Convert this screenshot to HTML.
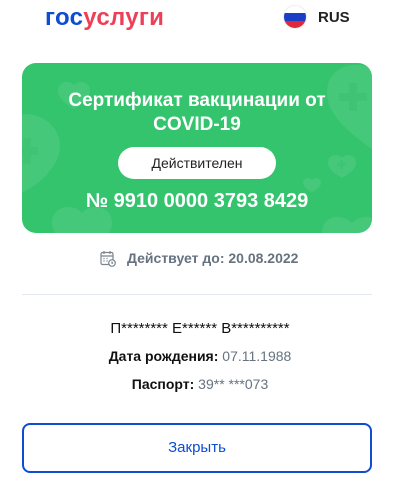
<!DOCTYPE html>
<html><head><meta charset="utf-8"><style>
body{margin:0;width:400px;height:487px;background:#fff;font-family:"Liberation Sans","DejaVu Sans",sans-serif;position:relative;overflow:hidden}
.a{position:absolute}
.c{left:0;width:400px;text-align:center}
</style></head><body>
<div class="a" style="left:45px;top:4px;font-size:24px;font-weight:bold;letter-spacing:0.3px"><span style="color:#0d4cd3">гос</span><span style="color:#ee3f58">услуги</span></div>
<div class="a" style="left:284px;top:6px;width:22px;height:22px;border-radius:50%;overflow:hidden;box-shadow:0 0 2px #ccc">
<div style="height:7.3px;background:#fff"></div><div style="height:7.4px;background:#1a3fc4"></div><div style="height:7.3px;background:#e0283a"></div></div>
<div class="a" style="left:318px;top:9px;font-size:15px;font-weight:bold;color:#222">RUS</div>

<div class="a" style="left:22px;top:63px;width:350px;height:170px;border-radius:14px;background:#33c46d;overflow:hidden">
<svg width="350" height="170" style="position:absolute;left:0;top:0">
<g fill="#52cc83" opacity="0.6">
<path d="M355 10 C340 -5 305 0 305 30 C305 55 335 75 355 90 C375 75 405 55 405 30 C405 0 370 -5 355 10Z"/>
<path d="M-10 55 C-25 45 -50 55 -45 80 C-40 105 -10 120 0 130 C20 120 40 100 38 80 C35 55 5 45 -10 55Z"/>
<path d="M52 22 C46 16 36 19 36 28 C36 36 46 42 52 46 C58 42 68 36 68 28 C68 19 58 16 52 22Z"/>
<path d="M320 95 C316 90 306 91 306 100 C306 107 315 112 320 115 C325 112 334 107 334 100 C334 91 324 90 320 95Z"/>
<path d="M290 117 C287 114 281 114 281 120 C281 124 286 127 290 129 C294 127 299 124 299 120 C299 114 293 114 290 117Z"/>
<path d="M60 150 C52 140 30 142 30 160 C30 175 50 185 60 190 C70 185 90 175 90 160 C90 142 68 140 60 150Z"/>
<path d="M330 160 C320 150 300 152 300 170 C300 180 320 190 330 195 C340 190 360 180 360 170 C360 152 340 150 330 160Z"/>
</g>
<g fill="#3ec474">
<rect x="327" y="20" width="8" height="28"/><rect x="317" y="30" width="28" height="8"/>
<rect x="1" y="75" width="8" height="26"/><rect x="-8" y="84" width="24" height="8"/>
<rect x="318" y="97" width="3" height="9"/><rect x="315" y="100" width="9" height="3"/>
</g>
</svg>
<div class="a" style="left:0;width:350px;top:26px;text-align:center;color:#fff;font-size:19px;font-weight:bold;line-height:24px">Сертификат вакцинации от<br>COVID-19</div>
<div class="a" style="left:96px;top:84px;width:158px;height:32px;border-radius:16px;background:#fff;text-align:center;line-height:32px;font-size:14px;color:#222">Действителен</div>
<div class="a" style="left:0;width:350px;top:127px;text-align:center;color:#fff;font-size:20px;font-weight:bold">№ 9910 0000 3793 8429</div>
</div>

<svg class="a" style="left:100px;top:250px" width="16" height="17" viewBox="0 0 16 17" fill="none" stroke="#7a8590" stroke-width="1.2">
<rect x="1" y="2.5" width="12" height="12" rx="1.5"/><path d="M4 1v3M10 1v3M1 6h12"/>
<circle cx="12" cy="13" r="3.3" fill="#fff"/><path d="M12 11.5v1.6h1.2"/>
<path d="M3.5 8.5h1M6.5 8.5h1M3.5 11h1M6.5 11h1" stroke-width="1.4"/>
</svg>
<div class="a" style="left:127px;top:250px;font-size:14px;font-weight:bold;color:#66727f">Действует до: 20.08.2022</div>
<div class="a" style="left:22px;top:294px;width:350px;height:1px;background:#e3e8ee"></div>
<div class="a c" style="top:320px;font-size:15px;color:#111">П******** Е****** В**********</div>
<div class="a c" style="top:348px;font-size:14px;color:#111"><b>Дата рождения:</b> <span style="color:#66727f">07.11.1988</span></div>
<div class="a c" style="top:376px;font-size:14px;color:#111"><b>Паспорт:</b> <span style="color:#66727f">39** ***073</span></div>
<div class="a" style="left:22px;top:423px;width:346px;height:46px;border:2px solid #0d4cd3;border-radius:8px;text-align:center;line-height:46px;font-size:15px;color:#0d4cd3">Закрыть</div>
</body></html>
